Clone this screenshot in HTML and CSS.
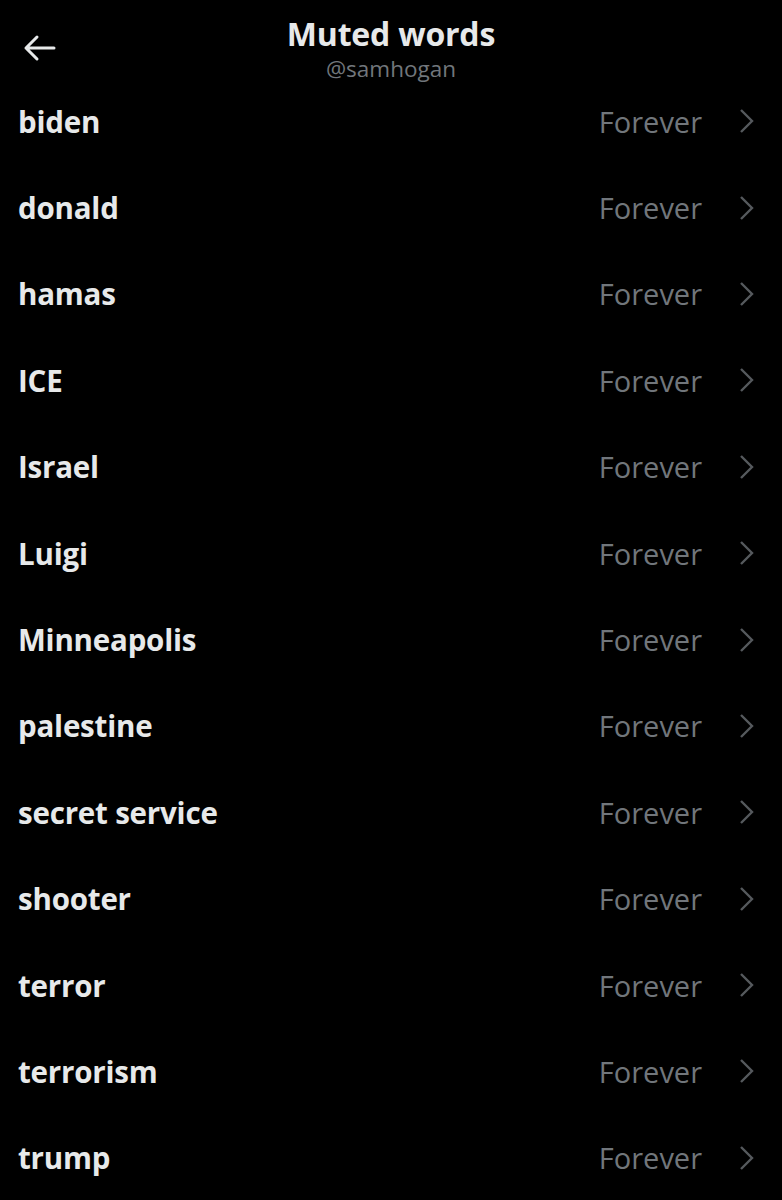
FILE: index.html
```html
<!DOCTYPE html>
<html>
<head>
<meta charset="utf-8">
<link rel="stylesheet" href="styles.css">
</head>
<body>
<div class="page">
  <header class="header">
    <div class="back">
      <svg width="34" height="28" viewBox="0 0 34 28"><path d="M32 14H4M15 3L4 14l11 11" fill="none" stroke="#e7e9ea" stroke-width="3" stroke-linecap="round" stroke-linejoin="round"/></svg>
    </div>
    <div class="titles">
      <div class="title">Muted words</div>
      <div class="handle">@samhogan</div>
    </div>
  </header>
  <ul class="list">
    <li class="row"><span class="word">biden</span><span class="dur">Forever</span><span class="chev"><svg width="16" height="26" viewBox="0 0 16 26"><path d="M3 2l11 11L3 24" fill="none" stroke="#55595d" stroke-width="2.4"/></svg></span></li>
    <li class="row"><span class="word">donald</span><span class="dur">Forever</span><span class="chev"><svg width="16" height="26" viewBox="0 0 16 26"><path d="M3 2l11 11L3 24" fill="none" stroke="#55595d" stroke-width="2.4"/></svg></span></li>
    <li class="row"><span class="word">hamas</span><span class="dur">Forever</span><span class="chev"><svg width="16" height="26" viewBox="0 0 16 26"><path d="M3 2l11 11L3 24" fill="none" stroke="#55595d" stroke-width="2.4"/></svg></span></li>
    <li class="row"><span class="word">ICE</span><span class="dur">Forever</span><span class="chev"><svg width="16" height="26" viewBox="0 0 16 26"><path d="M3 2l11 11L3 24" fill="none" stroke="#55595d" stroke-width="2.4"/></svg></span></li>
    <li class="row"><span class="word">Israel</span><span class="dur">Forever</span><span class="chev"><svg width="16" height="26" viewBox="0 0 16 26"><path d="M3 2l11 11L3 24" fill="none" stroke="#55595d" stroke-width="2.4"/></svg></span></li>
    <li class="row"><span class="word">Luigi</span><span class="dur">Forever</span><span class="chev"><svg width="16" height="26" viewBox="0 0 16 26"><path d="M3 2l11 11L3 24" fill="none" stroke="#55595d" stroke-width="2.4"/></svg></span></li>
    <li class="row"><span class="word">Minneapolis</span><span class="dur">Forever</span><span class="chev"><svg width="16" height="26" viewBox="0 0 16 26"><path d="M3 2l11 11L3 24" fill="none" stroke="#55595d" stroke-width="2.4"/></svg></span></li>
    <li class="row"><span class="word">palestine</span><span class="dur">Forever</span><span class="chev"><svg width="16" height="26" viewBox="0 0 16 26"><path d="M3 2l11 11L3 24" fill="none" stroke="#55595d" stroke-width="2.4"/></svg></span></li>
    <li class="row"><span class="word">secret service</span><span class="dur">Forever</span><span class="chev"><svg width="16" height="26" viewBox="0 0 16 26"><path d="M3 2l11 11L3 24" fill="none" stroke="#55595d" stroke-width="2.4"/></svg></span></li>
    <li class="row"><span class="word">shooter</span><span class="dur">Forever</span><span class="chev"><svg width="16" height="26" viewBox="0 0 16 26"><path d="M3 2l11 11L3 24" fill="none" stroke="#55595d" stroke-width="2.4"/></svg></span></li>
    <li class="row"><span class="word">terror</span><span class="dur">Forever</span><span class="chev"><svg width="16" height="26" viewBox="0 0 16 26"><path d="M3 2l11 11L3 24" fill="none" stroke="#55595d" stroke-width="2.4"/></svg></span></li>
    <li class="row"><span class="word">terrorism</span><span class="dur">Forever</span><span class="chev"><svg width="16" height="26" viewBox="0 0 16 26"><path d="M3 2l11 11L3 24" fill="none" stroke="#55595d" stroke-width="2.4"/></svg></span></li>
    <li class="row"><span class="word">trump</span><span class="dur">Forever</span><span class="chev"><svg width="16" height="26" viewBox="0 0 16 26"><path d="M3 2l11 11L3 24" fill="none" stroke="#55595d" stroke-width="2.4"/></svg></span></li>
  </ul>
</div>
</body>
</html>
```
FILE: styles.css
```css
html, body {
  margin: 0;
  padding: 0;
  background: #000;
}
.page {
  width: 782px;
  height: 1200px;
  overflow: hidden;
  background: #000;
  font-family: "Open Sans", "Liberation Sans", sans-serif;
  color: #e7e9ea;
}
.header {
  height: 78px;
  position: relative;
}
.back {
  position: absolute;
  left: 22px;
  top: 34px;
  width: 34px;
  height: 28px;
}
.back svg { display: block; }
.titles {
  display: flex;
  flex-direction: column;
  align-items: center;
  padding-top: 14px;
}
.title {
  font-size: 32px;
  font-weight: 700;
  line-height: 40px;
  letter-spacing: -0.2px;
}
.handle {
  font-size: 22.5px;
  color: #71767b;
  line-height: 26px;
  margin-top: 2px;
}
.list {
  list-style: none;
  margin: 0;
  padding: 0;
}
.row {
  height: 86.4px;
  display: flex;
  align-items: center;
  padding: 0 28px 0 18px;
}
.word {
  flex: 1;
  font-size: 29.5px;
  font-weight: 700;
  letter-spacing: -0.2px;
}
.dur {
  font-size: 29px;
  color: #71767b;
  margin-right: 36px;
}
.chev svg { display: block; }
```
